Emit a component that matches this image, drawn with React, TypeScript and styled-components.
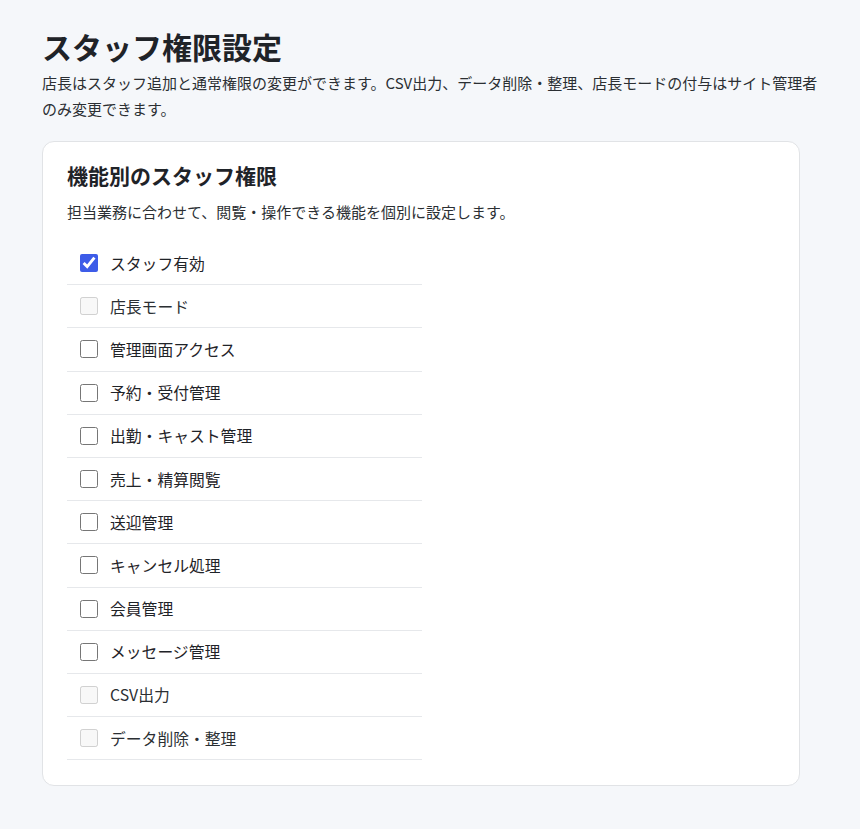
import React from "react";
import styled, { createGlobalStyle } from "styled-components";

const GlobalStyle = createGlobalStyle`
  body {
    margin: 0;
    background: #f5f7fa;
    font-family: "Noto Sans CJK JP", "Noto Sans", sans-serif;
    color: #1f2328;
  }
`;

const Page = styled.main`
  padding: 24px 42px 40px;
`;

const Title = styled.h1`
  margin: 0;
  font-size: 30px;
  font-weight: 700;
  line-height: 44px;
  color: #1f2328;
`;

const Lead = styled.p`
  margin: 2px 0 19px;
  font-size: 15px;
  line-height: 26px;
  color: #2b2f33;
`;

const Card = styled.section`
  width: 758px;
  box-sizing: border-box;
  background: #fff;
  border: 1px solid #e1e3e6;
  border-radius: 12px;
  padding: 17px 24px 25px;
`;

const CardTitle = styled.h2`
  margin: 0;
  font-size: 21px;
  font-weight: 700;
  line-height: 32px;
`;

const CardNote = styled.p`
  margin: 9px 0 18px;
  font-size: 15px;
  line-height: 24px;
  color: #2b2f33;
`;

const List = styled.ul`
  list-style: none;
  margin: 0;
  padding: 0;
  width: 355px;
`;

const Row = styled.li`
  display: flex;
  align-items: center;
  gap: 12px;
  height: 42.2px;
  padding-left: 13px;
  border-bottom: 1px solid #e6e8eb;
`;

const Box = styled.input`
  margin: 0;
  width: 18px;
  height: 18px;
  accent-color: #3d5ce8;
`;

const Label = styled.label<{ $muted?: boolean }>`
  font-size: 15.8px;
  color: ${(p) => (p.$muted ? "#2b2f33" : "#1f2328")};
`;

const items = [
  { name: "スタッフ有効", checked: true },
  { name: "店長モード", disabled: true },
  { name: "管理画面アクセス" },
  { name: "予約・受付管理" },
  { name: "出勤・キャスト管理" },
  { name: "売上・精算閲覧" },
  { name: "送迎管理" },
  { name: "キャンセル処理" },
  { name: "会員管理" },
  { name: "メッセージ管理" },
  { name: "CSV出力", disabled: true },
  { name: "データ削除・整理", disabled: true },
];

export default function App() {
  return (
    <>
      <GlobalStyle />
      <Page>
        <Title>スタッフ権限設定</Title>
        <Lead>
          店長はスタッフ追加と通常権限の変更ができます。CSV出力、データ削除・整理、店長モードの付与はサイト管理者のみ変更できます。
        </Lead>
        <Card>
          <CardTitle>機能別のスタッフ権限</CardTitle>
          <CardNote>担当業務に合わせて、閲覧・操作できる機能を個別に設定します。</CardNote>
          <List>
            {items.map((it, i) => (
              <Row key={it.name}>
                <Box
                  type="checkbox"
                  id={`perm-${i}`}
                  defaultChecked={it.checked}
                  disabled={it.disabled}
                />
                <Label htmlFor={`perm-${i}`} $muted={it.disabled}>
                  {it.name}
                </Label>
              </Row>
            ))}
          </List>
        </Card>
      </Page>
    </>
  );
}
